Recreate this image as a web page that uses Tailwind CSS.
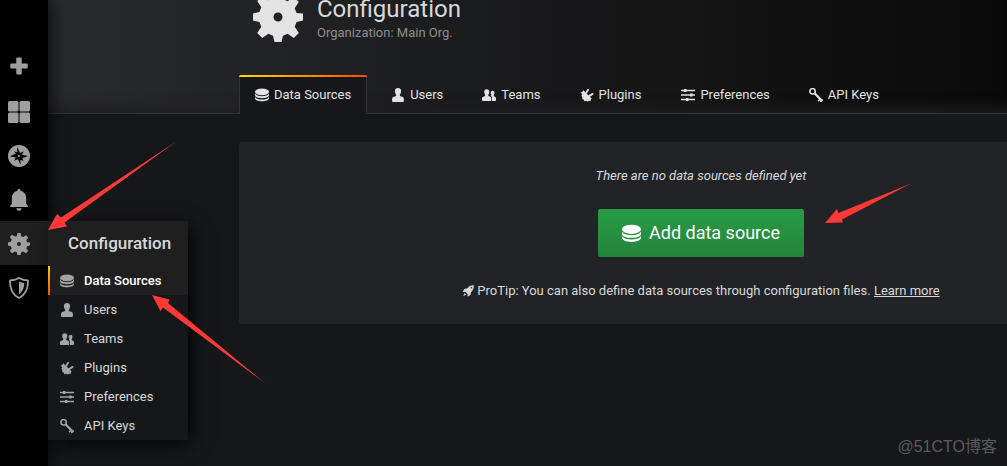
<!DOCTYPE html>
<html lang="en">
<head>
<meta charset="utf-8">
<meta name="viewport" content="width=device-width, initial-scale=1">
<title>Configuration: Data Sources</title>
<script src="https://cdn.jsdelivr.net/npm/@tailwindcss/browser@4"></script>
</head>
<body class="relative flex min-h-screen overflow-x-hidden bg-[#161719] font-[Roboto,'Noto_Sans_CJK_SC',sans-serif] text-[13px] leading-5 text-[#d8d9da]">

<svg class="hidden" aria-hidden="true">
  <symbol id="gear" viewBox="0 0 50 50">
    <path fill="currentColor" fill-rule="evenodd" d="M21.500 0h7l1.500 7.300 4.600 1.900 6.200-4.100 5 5-4.100 6.200 1.900 4.600L50 21.500v7l-6.400 1.600-1.900 4.600 4.100 6.200-5 5-6.200-4.100-4.600 1.900L28.500 50h-7L20 43.700l-4.600-1.900-6.200 4.100-5-5 4.100-6.200-1.900-4.600L0 28.500v-7l6.400-1.600 1.900-4.600-4.100-6.200 5-5 6.200 4.100L20 7.300zM25 20.500a4.500 4.500 0 1 0 0 9 4.500 4.500 0 0 0 0-9z"/>
  </symbol>
  <symbol id="database" viewBox="0 0 14 14">
    <ellipse cx="7" cy="3.900" rx="7" ry="3.400" fill="currentColor"/>
    <path fill="currentColor" d="M0 5.600C1.200 7.700 3.800 8.200 7 8.200s5.800-.5 7-2.600v1.700C14 9 11 10.200 7 10.200S0 9 0 7.300zM0 8.900c1.200 2 3.800 2.500 7 2.500s5.800-.5 7-2.500v1.300c0 1.700-3 3-7 3s-7-1.300-7-3z"/>
  </symbol>
  <symbol id="user" viewBox="0 0 14 14">
    <path fill="currentColor" d="M7 0c2.200 0 3.200 1.400 3.100 3.200-.1 1.700-.8 3-1.300 3.800-.1.900.2 1.300 1.200 1.500 1.900.4 2.900 1.100 2.900 2.500v1.800c0 .8-.5 1.200-1.200 1.200H2.300c-.7 0-1.200-.4-1.200-1.200V11c0-1.400 1-2.100 2.900-2.500 1-.2 1.300-.6 1.200-1.500-.5-.8-1.200-2.100-1.300-3.800C3.800 1.400 4.800 0 7 0z"/>
  </symbol>
  <symbol id="users" viewBox="0 0 14 14">
    <path fill="currentColor" d="M4.800 1.200c1.800 0 2.600 1.200 2.500 2.700C7.200 5.200 6.700 6 6.300 6.700c-.2.700 0 1.100.8 1.500 1.400.5 2.100 1 2.100 2.200V12c0 .6-.4 1-1 1H1c-.6 0-1-.4-1-1v-1.600c0-1.200.9-1.700 2.400-2.200.8-.4 1-.8.800-1.500-.4-.7-.9-1.500-1-2.800-.1-1.500.8-2.700 2.600-2.700z"/>
    <path fill="currentColor" d="M10.600 2.700c1.400 0 2 1 1.900 2.200-.1 1-.5 1.700-.8 2.200-.2.600 0 1 .6 1.300 1.100.4 1.700.9 1.700 2V12c0 .6-.3 1-.8 1h-3.300V10c0-1.200-.5-1.900-1.300-2.400.7-.3.900-.5.700-1-.4-.5-.6-1-.6-1.700 0-1.200.6-2.200 1.900-2.200z"/>
  </symbol>
  <symbol id="plug" viewBox="0 0 14 14">
    <path fill="currentColor" d="M3.300 2.200l8.300 8.400-1 1.300.1 1.400-1.600-.5-1.600.6-1.400-.6-1.800.4-.6-1.600-1.600-.6.300-1.900-1.100-1.400 1-1.500L.4 4.500l1.800-.6z"/>
    <path fill="none" stroke="currentColor" stroke-width="1.900" stroke-linecap="round" d="M6.200 4.800l1.900-3M9.400 7.900l3.200-2"/>
  </symbol>
  <symbol id="sliders" viewBox="0 0 14 14">
    <path stroke="currentColor" stroke-width="1.300" d="M0 2.500h14M0 7h14M0 11.500h14"/>
    <path fill="currentColor" d="M3 1h2.400v3H3zM9.200 5.500h2.400v3H9.200zM5 10h2.400v3H5z"/>
  </symbol>
  <symbol id="key" viewBox="0 0 14 14">
    <circle cx="3.600" cy="3.300" r="2.700" fill="none" stroke="currentColor" stroke-width="1.500"/>
    <path fill="none" stroke="currentColor" stroke-width="2.200" d="M5.500 5.200l7.500 7.500"/>
    <path fill="none" stroke="currentColor" stroke-width="1.600" d="M11.600 11l-2.600 2.200M13.900 11.800l-2.600 2"/>
  </symbol>
  <symbol id="rocket" viewBox="0 0 14 14">
    <path fill="currentColor" d="M13.800.3c.2 3.500-.8 5.700-3.400 8.100l-.3 2.900-3.100 2.200-.7-.4.300-2.600-2.700-2.600-2.700.4-.4-.7 2.300-3.100 2.900-.3C8.300 1.300 10.400.2 13.800.3zM11 2.200a1 1 0 1 0 .1 2 1 1 0 0 0-.1-2zM2.900 9.400l2 1.900-3.500 1.500z" fill-rule="evenodd"/>
  </symbol>
</svg>

<nav aria-label="Main" class="z-20 flex w-12 shrink-0 flex-col bg-black pt-[45px] text-[#9f9f9f] shadow-[0_0_20px_#000]">
  <a href="#" aria-label="Create" class="flex h-11 items-center justify-center pr-2.5">
    <svg class="size-[22px]" viewBox="0 0 22 22"><path fill="currentColor" d="M9 1.500h4q.7 0 .7.700v5.300H19q.7 0 .7.700v3.500q0 .7-.7.700h-5.300v5.400q0 .7-.7.700H9q-.7 0-.7-.7v-5.400H3q-.7 0-.7-.7V8.200q0-.7.700-.7h5.300V2.200q0-.7.700-.7z"/></svg>
  </a>
  <a href="#" aria-label="Dashboards" class="flex h-11 items-center justify-center pt-0.5 pr-2.5">
    <svg class="size-[22px]" viewBox="0 0 22 22" fill="currentColor"><rect width="10.500" height="10.500" rx="1.500"/><rect x="11.500" width="10.500" height="10.500" rx="1.500"/><rect y="11.500" width="10.500" height="10.500" rx="1.500"/><rect x="11.500" y="11.500" width="10.500" height="10.500" rx="1.500"/></svg>
  </a>
  <a href="#" aria-label="Explore" class="flex h-11 items-center justify-center pt-0.5 pr-2.5">
    <svg class="size-[22px]" viewBox="0 0 22 22"><circle cx="11" cy="11" r="11" fill="currentColor"/><path fill="#000" d="M9 2l3.200 6 3.600-1.800-1.800 3.600 6 1.100-5.700 2.300 1.300 2.800-3.300-1.200L12.800 20l-3-5.800-3.600 1.600 1.600-3.400-6-1.200 5.900-2.500-1.500-2.500 3.100 1.200z"/><circle cx="11" cy="11" r="1" fill="currentColor"/></svg>
  </a>
  <a href="#" aria-label="Alerting" class="flex h-11 items-center justify-center pt-0.5 pr-2.5">
    <svg class="size-[22px]" viewBox="0 0 22 22" fill="currentColor"><path d="M11 0c1 0 1.600.7 1.600 1.700 3.700.9 5.600 3.700 5.600 7.300v5.800l1.600 2c.4.600.1 1.200-.5 1.200H2.700c-.6 0-.9-.6-.5-1.200l1.600-2V9c0-3.600 1.900-6.400 5.600-7.300C9.400.7 10 0 11 0zM8.200 19.200h5.600c-.4 1.700-1.400 2.600-2.800 2.600s-2.400-.9-2.800-2.600z"/></svg>
  </a>
  <a href="#" aria-label="Configuration" aria-current="page" class="flex h-11 items-center justify-center bg-[#1f1f20] pt-0.5 pr-2.5">
    <svg class="size-[22px]"><use href="#gear"/></svg>
  </a>
  <a href="#" aria-label="Server Admin" class="flex h-11 items-center justify-center pt-0.5 pr-2.5">
    <svg class="size-[22px]" viewBox="0 0 22 22"><path fill="none" stroke="currentColor" stroke-width="1.800" stroke-linejoin="round" d="M11 1c3 1.700 6 2.400 9 2.400.2 8-2.700 14.400-9 17.600C4.700 17.800 1.800 11.400 2 3.400 5 3.400 8 2.700 11 1z"/><path fill="currentColor" d="M11 4.500c1.800.9 3.500 1.400 5.400 1.500-.2 4.700-1.900 8.800-5.400 11.500z"/></svg>
  </a>
</nav>

<aside aria-label="Configuration menu" class="absolute top-[221px] left-12 z-30 w-[140px] bg-[#161719] shadow-[5px_5px_20px_-3px_#000]">
  <div class="bg-[#1f1f20]">
    <h2 class="h-[45px] pl-5 text-[17px] leading-[45px] font-medium whitespace-nowrap">Configuration</h2>
    <a href="#" class="relative flex h-[29px] items-center gap-2.5 pl-3 font-medium text-white">
      <span class="absolute inset-y-0 left-0 w-0.5 bg-linear-to-b from-[#ffc400] to-[#ff4d08]"></span>
      <svg class="size-3.5 text-[#a5a5a5]"><use href="#database"/></svg>Data Sources</a>
  </div>
  <a href="#" class="flex h-[29px] items-center gap-2.5 pl-3"><svg class="size-3.5 text-[#a5a5a5]"><use href="#user"/></svg>Users</a>
  <a href="#" class="flex h-[29px] items-center gap-2.5 pl-3"><svg class="size-3.5 text-[#a5a5a5]"><use href="#users"/></svg>Teams</a>
  <a href="#" class="flex h-[29px] items-center gap-2.5 pl-3"><svg class="size-3.5 text-[#a5a5a5]"><use href="#plug"/></svg>Plugins</a>
  <a href="#" class="flex h-[29px] items-center gap-2.5 pl-3"><svg class="size-3.5 text-[#a5a5a5]"><use href="#sliders"/></svg>Preferences</a>
  <a href="#" class="flex h-[29px] items-center gap-2.5 pl-3"><svg class="size-3.5 text-[#a5a5a5]"><use href="#key"/></svg>API Keys</a>
</aside>

<main class="min-w-0 flex-1 overflow-hidden">
  <header class="border-b border-[#333436] bg-linear-to-r from-[#292a2d] to-[#0a0a0a] pl-[191px] shadow-[inset_0_-18px_14px_-14px_#1f1f20]">
    <div class="flex h-[75px] gap-3.5 pl-3.5">
      <svg class="-mt-2 size-[50px] text-[#e3e3e3]"><use href="#gear"/></svg>
      <div>
        <h1 class="text-2xl leading-[18px]">Configuration</h1>
        <p class="mt-1 leading-[22px] text-[#8e8e8e]">Organization: Main Org.</p>
      </div>
    </div>
    <div class="-mb-px flex h-[39px] whitespace-nowrap text-[#e3e3e3]">
      <a href="#" aria-current="page" class="relative flex items-center gap-[5px] rounded-t-[3px] border-x border-[#333436] bg-[#161719] px-[15px]">
        <span class="absolute -inset-x-px top-0 h-0.5 rounded-t-sm bg-linear-to-r from-[#ffd500] to-[#ff4400]"></span>
        <svg class="size-3.5"><use href="#database"/></svg>Data Sources</a>
      <a href="#" class="ml-2 flex items-center gap-[5px] px-4"><svg class="size-3.5"><use href="#user"/></svg>Users</a>
      <a href="#" class="ml-[7px] flex items-center gap-[5px] px-4"><svg class="size-3.5"><use href="#users"/></svg>Teams</a>
      <a href="#" class="ml-[7px] flex items-center gap-[5px] px-4"><svg class="size-3.5"><use href="#plug"/></svg>Plugins</a>
      <a href="#" class="ml-2 flex items-center gap-[5px] px-4"><svg class="size-3.5"><use href="#sliders"/></svg>Preferences</a>
      <a href="#" class="ml-[7px] flex items-center gap-[5px] px-4"><svg class="size-3.5"><use href="#key"/></svg>API Keys</a>
    </div>
  </header>

  <section class="mt-7 -mr-[156px] ml-[191px] flex flex-col items-center rounded-[3px] bg-[#222326] pt-6 pb-[23px]">
    <p class="italic">There are no data sources defined yet</p>
    <button type="button" class="mt-[23px] flex h-12 items-center gap-2 rounded-xs bg-linear-to-b from-[#299c46] to-[#23843b] px-6 text-lg text-white"><svg class="size-[19px]"><use href="#database"/></svg>Add data source</button>
    <p class="mt-6 flex items-center gap-[3px] whitespace-nowrap"><svg class="size-3"><use href="#rocket"/></svg><span>ProTip: You can also define data sources through configuration files. <a href="#" class="underline">Learn more</a></span></p>
  </section>
</main>

<svg class="pointer-events-none absolute top-0 left-0 z-40 h-[466px] w-[1007px]" viewBox="0 0 1007 466" fill="#ff3838" aria-hidden="true">
  <path d="M48 230L57 214 61 217.500 177 141 64.500 222.500 67 226.500z"/>
  <path d="M152 295L169.500 299.500 168 303 265.500 383.500 163 307.500 160.500 311z"/>
  <path d="M825 223L837 209 838.500 213 911 183.500 842 219.500 843 222.500z"/>
</svg>
<p class="absolute right-2.5 bottom-[9px] font-['Liberation_Sans','Noto_Sans_CJK_SC',sans-serif] text-base leading-5 text-[#5b5c5d]">@51CTO博客</p>
</body>
</html>
